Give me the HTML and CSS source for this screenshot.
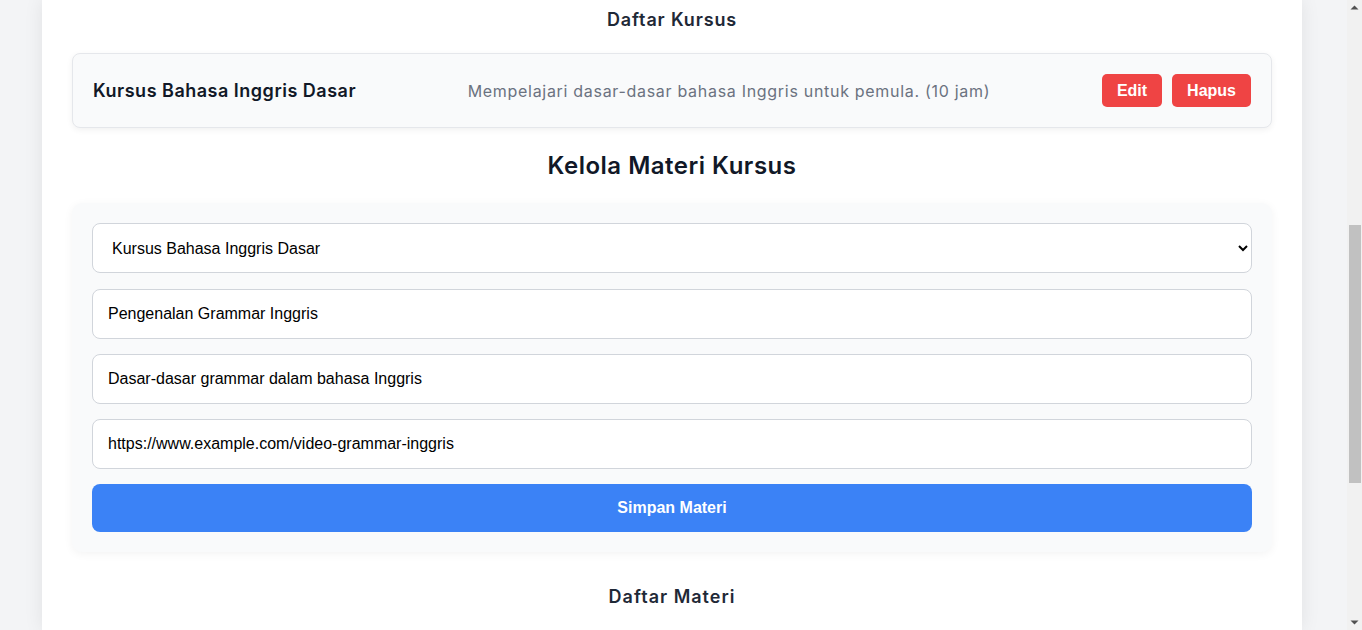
FILE: index.html
```html
<!DOCTYPE html>
<html lang="id">
<head>
<meta charset="utf-8">
<title>Kelola Kursus</title>
<link rel="stylesheet" href="styles.css">
</head>
<body>
<div class="viewport">
  <main class="page">
    <div class="container">
      <h3 class="section-title">Daftar Kursus</h3>
      <div class="course-card">
        <div class="course-name">Kursus Bahasa Inggris Dasar</div>
        <div class="course-desc">Mempelajari dasar-dasar bahasa Inggris untuk pemula. (10 jam)</div>
        <div class="course-actions">
          <button class="btn btn-red">Edit</button>
          <button class="btn btn-red">Hapus</button>
        </div>
      </div>
      <h2 class="main-title">Kelola Materi Kursus</h2>
      <form class="form-box">
        <select class="field field-select">
          <option>Kursus Bahasa Inggris Dasar</option>
        </select>
        <input class="field" type="text" value="Pengenalan Grammar Inggris">
        <input class="field" type="text" value="Dasar-dasar grammar dalam bahasa Inggris">
        <input class="field" type="text" value="https://www.example.com/video-grammar-inggris">
        <button type="button" class="btn btn-blue">Simpan Materi</button>
      </form>
      <h3 class="section-title materi-title">Daftar Materi</h3>
    </div>
  </main>
  <div class="scrollbar">
    <div class="sb-btn"><svg width="15" height="17" viewBox="0 0 15 17"><path d="M3.5 9.5 L7.5 5.5 L11.5 9.5 Z" fill="#505050"/></svg></div>
    <div class="sb-track">
      <div class="sb-space"></div>
      <div class="sb-thumb"></div>
      <div class="sb-rest"></div>
    </div>
    <div class="sb-btn"><svg width="15" height="17" viewBox="0 0 15 17"><path d="M3.5 7.5 L11.5 7.5 L7.5 11.5 Z" fill="#505050"/></svg></div>
  </div>
</div>
</body>
</html>
```

FILE: styles.css
```css
* { box-sizing: border-box; }

html, body {
  margin: 0;
  height: 100%;
  overflow: hidden;
}

body {
  background: #f3f4f6;
  font-family: "Inter", "Liberation Sans", sans-serif;
  color: #1f2937;
}

.viewport {
  display: flex;
  height: 630px;
}

.page {
  flex: 1;
  display: flex;
  padding-left: 42px;
}

.container {
  width: 1260px;
  background: #ffffff;
  box-shadow: 0 0 18px rgba(0, 0, 0, 0.08);
  padding: 6px 30px 0;
}

.section-title {
  margin: 0 0 20px;
  font-size: 18px;
  line-height: 27px;
  font-weight: 600;
  text-align: center;
  color: #1f2937;
  letter-spacing: 0.85px;
}

.course-card {
  display: flex;
  align-items: center;
  justify-content: space-between;
  background: #f9fafb;
  border: 1px solid #e5e7eb;
  border-radius: 8px;
  box-shadow: 0 2px 6px rgba(0, 0, 0, 0.06);
  padding: 20px;
  margin-bottom: 20px;
}

.course-name {
  font-size: 18px;
  font-weight: 600;
  color: #111827;
  letter-spacing: 0.5px;
}

.course-desc {
  font-size: 16px;
  color: #6b7280;
  letter-spacing: 0.7px;
}

.course-actions {
  display: flex;
  gap: 10px;
}

.btn {
  font-family: "Liberation Sans", Arial, sans-serif;
  font-weight: 700;
  font-size: 16px;
  color: #ffffff;
  border: none;
  border-radius: 5px;
  cursor: pointer;
}

.btn-red {
  background: #ef4444;
  height: 33px;
  padding: 0 15px;
}

.main-title {
  margin: 0 0 19px;
  font-size: 24px;
  line-height: 36px;
  font-weight: 600;
  text-align: center;
  color: #111827;
  letter-spacing: 0.5px;
}

.form-box {
  display: flex;
  flex-direction: column;
  gap: 15px;
  background: #f9fafb;
  border-radius: 10px;
  box-shadow: 0 2px 10px rgba(0, 0, 0, 0.05);
  padding: 20px;
  margin: 0 0 31px;
}

.field {
  height: 50px;
  border: 1px solid #d1d5db;
  border-radius: 8px;
  background: #ffffff;
  font-family: "Liberation Sans", Arial, sans-serif;
  font-size: 16px;
  color: #000000;
  padding: 0 15px;
  outline: none;
}

.field-select {
  padding: 0 12px 0 15px;
  margin-bottom: 1px;
}

.btn-blue {
  background: #3b82f6;
  height: 48px;
  border-radius: 8px;
}

.materi-title {
  font-size: 18px;
  line-height: 28px;
  letter-spacing: 1px;
}

.scrollbar {
  width: 15px;
  display: flex;
  flex-direction: column;
  background: #f1f1f1;
}

.sb-btn {
  height: 17px;
  display: flex;
  align-items: center;
  justify-content: center;
}

.sb-track {
  flex: 1;
  display: flex;
  flex-direction: column;
  padding: 0 1px 0 2px;
}

.sb-space {
  height: 208px;
}

.sb-thumb {
  height: 258px;
  background: #c1c1c1;
}

.sb-rest {
  flex: 1;
}
```
